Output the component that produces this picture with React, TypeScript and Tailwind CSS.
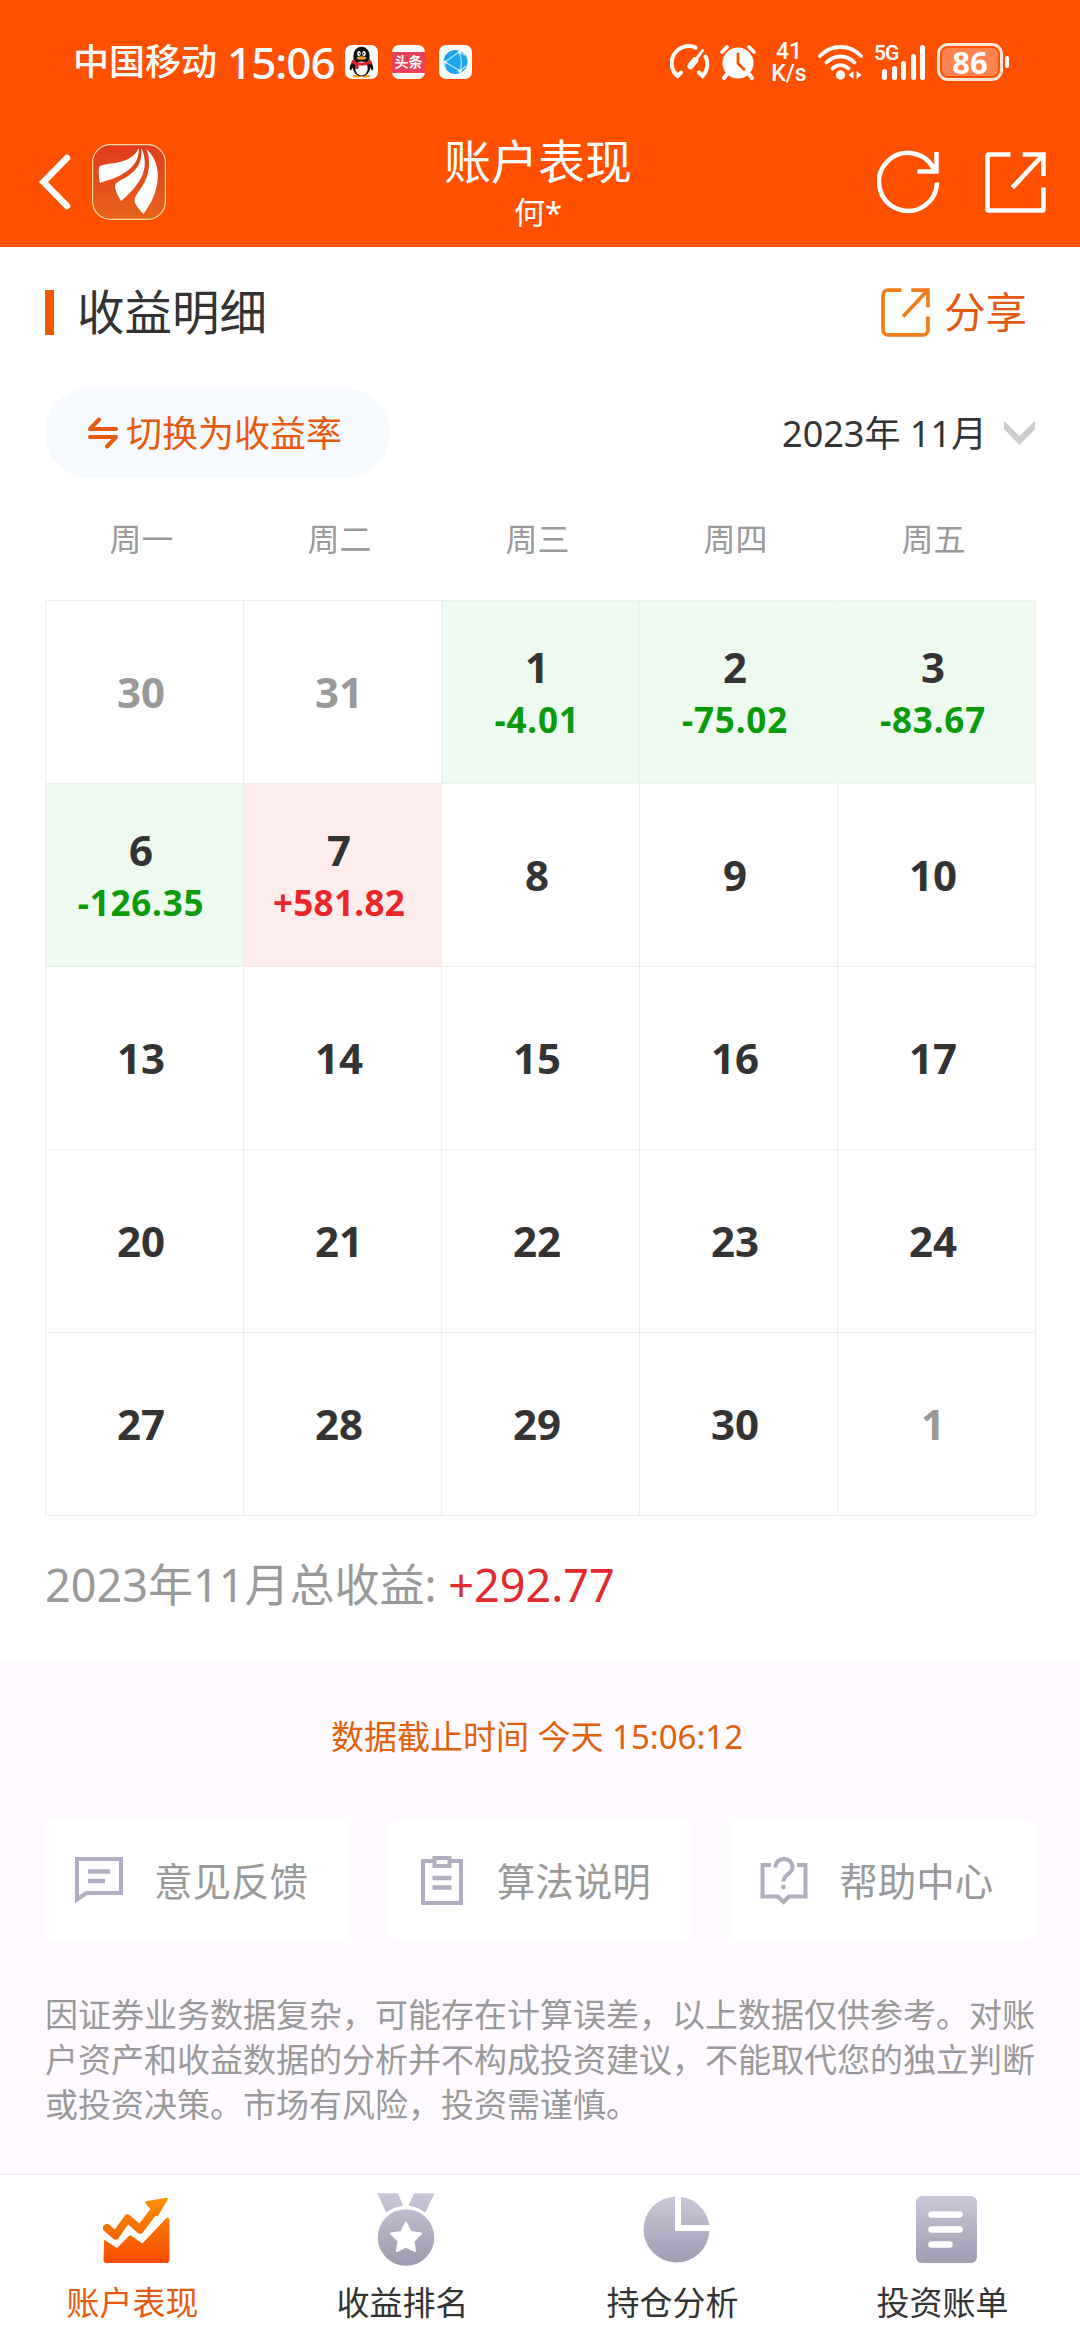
import { ReactNode } from 'react';
import clsx from 'clsx';

type Day = { day: number; value?: string; muted?: boolean };

const weekdays = ['周一', '周二', '周三', '周四', '周五'];

const days: Day[] = [
  { day: 30, muted: true },
  { day: 31, muted: true },
  { day: 1, value: '-4.01' },
  { day: 2, value: '-75.02' },
  { day: 3, value: '-83.67' },
  { day: 6, value: '-126.35' },
  { day: 7, value: '+581.82' },
  { day: 8 },
  { day: 9 },
  { day: 10 },
  { day: 13 },
  { day: 14 },
  { day: 15 },
  { day: 16 },
  { day: 17 },
  { day: 20 },
  { day: 21 },
  { day: 22 },
  { day: 23 },
  { day: 24 },
  { day: 27 },
  { day: 28 },
  { day: 29 },
  { day: 30 },
  { day: 1, muted: true },
];

const QQIcon = () => (
  <svg width="33" height="34" viewBox="0 0 33 34">
    <rect width="33" height="34" rx="7" fill="#fff" />
    <path d="M9 14C6 18 4 22 5 25c1 1 2-1 3-3M24 14c3 4 5 8 4 11-1 1-2-1-3-3" fill="#111" />
    <ellipse cx="12" cy="31" rx="4.5" ry="1.6" fill="#f5a623" />
    <ellipse cx="21" cy="31" rx="4.5" ry="1.6" fill="#f5a623" />
    <ellipse cx="16.5" cy="21.5" rx="9" ry="9.8" fill="#111" />
    <ellipse cx="16.5" cy="23.5" rx="6.2" ry="7" fill="#fff" />
    <path d="M8.5 15V10a8 8.3 0 0 1 16 0v5z" fill="#111" />
    <path d="M7 15c6 3.5 13 3.5 19 0l1 3.5c-4 1.5-7 2-10.5 2-1 0-2 0-3-.2V24h-3.5v-4.5L6.5 18z" fill="#e0202c" />
    <ellipse cx="14" cy="8.5" rx="1.8" ry="2.5" fill="#fff" />
    <ellipse cx="19" cy="8.5" rx="1.8" ry="2.5" fill="#fff" />
    <circle cx="14.5" cy="8.8" r=".8" fill="#111" />
    <circle cx="18.5" cy="8.8" r=".8" fill="#111" />
    <ellipse cx="16.5" cy="13" rx="4.8" ry="1.7" fill="#f5a623" />
  </svg>
);

const GlobeIcon = () => (
  <svg width="33" height="34" viewBox="0 0 33 34">
    <rect width="33" height="34" rx="7" fill="#fff" />
    <circle cx="16.5" cy="17" r="12" fill="#1ba4f0" />
    <path d="M6 17 20 7M6 17l15 9M20 7c3 6 3 13 1 21M6 17c-1 4 0 6 2 9M20 7l6 3M21 26l6-5" stroke="#bfe8ff" strokeWidth="1.2" fill="none" />
    <circle cx="6" cy="17" r="1.6" fill="#fff" />
    <circle cx="20.5" cy="7" r="1.6" fill="#fff" />
    <circle cx="21" cy="26" r="1.8" fill="#fff" />
  </svg>
);

const GaugeIcon = () => (
  <svg width="40" height="36" viewBox="0 0 40 36" fill="none" stroke="#fff" strokeLinecap="round">
    <path d="M25.5 3.6A17 17 0 0 0 7.5 32l3.5-3.500" strokeWidth="4" />
    <path d="M35.5 12.5A17 17 0 0 1 32.5 32L29 28.5" strokeWidth="4" />
    <path d="M32.5 6.5 21.5 22" strokeWidth="3" />
    <path d="m25 16.500-4.500 5.500" strokeWidth="6.5" />
  </svg>
);

const AlarmIcon = () => (
  <svg width="36" height="36" viewBox="0 0 36 36" fill="none" stroke="#fff" strokeLinecap="round">
    <circle cx="18" cy="19" r="15.5" fill="#fff" stroke="none" />
    <path d="M2 8l5-5M34 8l-5-5" strokeWidth="3.6" />
    <path d="M7 30l-3 4M29 30l3 4" strokeWidth="4" />
    <path d="M18 10v9.500l6 6" stroke="#ff5000" strokeWidth="2.8" />
  </svg>
);

const WifiIcon = () => (
  <svg width="45" height="37" viewBox="0 0 45 37" fill="none" stroke="#fff" strokeLinecap="round">
    <path d="M2 12C13 0 32 0 43 12" strokeWidth="3.8" />
    <path d="M8.5 18.5c8-8 20-8 28 0" strokeWidth="3.8" />
    <path d="M14.5 24.5c5-4.500 11-4.500 16 0" strokeWidth="3.8" />
    <circle cx="22.5" cy="31" r="4.7" fill="#fff" stroke="none" />
    <path d="M35.5 27v8l-5-4zM38.5 27v8l5-4z" fill="#fff" stroke="none" />
  </svg>
);

const LogoIcon = () => (
  <svg width="74" height="76" viewBox="0 0 74 76">
    <defs>
      <linearGradient id="logo" x1="0" y1="0" x2="0" y2="1">
        <stop offset="0" stopColor="#e03a1c" />
        <stop offset="1" stopColor="#e8641a" />
      </linearGradient>
    </defs>
    <rect x=".6" y=".6" width="72.8" height="74.8" rx="18" fill="url(#logo)" stroke="#ffd9a8" strokeWidth="1.2" />
    <path d="M47 4C42 14 32 18 20 19.5 14 20.3 9 21 7.500 22.500 6 26 7 34 8 39c7-3 14-4 21-8C41 24 47 17 47 4z" fill="#fff" />
    <path d="M49.5 4C58 24 50 39 29 57c-3-5-6-11-6-15 0-4 7-6 13-10C46 25 50 18 49.5 4z" fill="#fff" />
    <path d="M54.5 5C66 16 68 30 64 45c-2 9-7 17-12.500 25C47 65 43 61 42.500 56.500 43 50 50 45 54 35c4-10 4-20 .5-30z" fill="#fff" />
  </svg>
);

const RefreshIcon = () => (
  <svg width="63" height="64" viewBox="0 0 63 64" fill="none" stroke="#fff" strokeWidth="4.5">
    <path d="M60 32.5A29 29 0 1 1 57 19M59.5 2v19.5H40.5" />
  </svg>
);

const ShareIcon = ({ size, color, width, r }: { size: number; color: string; width: number; r: number }) => (
  <svg width={size} height={size} viewBox="0 0 60 60" fill="none" stroke={color} strokeWidth={width} strokeLinejoin="round">
    <path d={`M25 2.500H${2.5 + r}a${r} ${r} 0 0 0-${r} ${r}V${57.5 - r}a${r} ${r} 0 0 0 ${r} ${r}H${57.5 - r}a${r} ${r} 0 0 0 ${r}-${r}V35`} />
    <path d="M37 2.500h20.500v21M57 3 27 35" strokeLinejoin="miter" />
  </svg>
);

const Header = () => (
  <header className="h-[247px] bg-[#ff5000] text-white">
    <div className="flex h-[124px] items-center pr-[71px] pl-[73px]">
      <span className="text-[36px] font-medium">中国移动</span>
      <span className="ml-2.5 w-[109px] text-[44px] font-medium tracking-[-1px] whitespace-nowrap">15:06</span>
      <div className="ml-[9px] flex items-center gap-[14px]">
        <QQIcon />
        <div className="flex h-[34px] w-[33px] items-center justify-center overflow-hidden rounded-[7px] bg-white">
          <span className="h-[21px] w-full bg-[#ea3f58] text-center text-[14px] leading-[20px] font-bold">头条</span>
        </div>
        <GlobeIcon />
      </div>
      <div className="ml-auto flex items-center">
        <GaugeIcon />
        <div className="ml-[10px]">
          <AlarmIcon />
        </div>
        <div className="ml-[14px] flex w-[38px] flex-col items-center font-['Roboto'] text-[23px] leading-[23px] font-medium">
          <span className="h-[22px]">41</span>
          <span className="h-[22px]">K/s</span>
        </div>
        <div className="ml-[10px]">
          <WifiIcon />
        </div>
        <div className="relative ml-[11px] flex h-[36px] w-[51px] items-end justify-end gap-[4.5px]">
          <span className="absolute top-[-3px] left-0 font-['Roboto'] text-[21px] leading-6 font-semibold tracking-[-1px]">5G</span>
          <i className="h-[11px] w-[5px] rounded-full bg-white" />
          <i className="h-[14px] w-[5px] rounded-full bg-white" />
          <i className="h-[19px] w-[5px] rounded-full bg-white" />
          <i className="h-[26px] w-[5px] rounded-full bg-white" />
          <i className="h-[35px] w-[5px] rounded-full bg-white" />
        </div>
        <div className="ml-[12px] flex h-[38px] w-[66px] items-center justify-center rounded-[11px] border-3 border-[#ffe6d8] p-[2px]">
          <span className="h-full w-full rounded-[6px] bg-[#ff8350] text-center text-[31px] leading-[28px] font-bold">86</span>
        </div>
        <i className="ml-[2px] h-[12px] w-[4px] rounded-full bg-white" />
      </div>
    </div>
    <div className="grid h-[116px] grid-cols-3 items-center px-[35px]">
      <div className="flex items-center pl-[4px]">
        <svg width="32" height="56" viewBox="0 0 32 56" fill="none" stroke="#fff" strokeWidth="6.5" strokeLinecap="round">
          <path d="M28 4 4.500 28 28 52" />
        </svg>
        <div className="ml-[21px]">
          <LogoIcon />
        </div>
      </div>
      <div className="flex flex-col items-center pr-[4px]">
        <h1 className="text-[47px] leading-[60px]">账户表现</h1>
        <span className="text-[31px] leading-[43px]">何*</span>
      </div>
      <div className="-mr-px flex items-center justify-end gap-[45px]">
        <RefreshIcon />
        <ShareIcon size={61} color="#fff" width={4.5} r={1} />
      </div>
    </div>
  </header>
);

const Calendar = () => (
  <div className="mt-[31px]">
    <div className="grid grid-cols-5 text-center text-[32px] leading-[60px] text-[#999]">
      {weekdays.map((w) => (
        <span key={w} className="pr-[5px]">{w}</span>
      ))}
    </div>
    <div className="mt-[31px] -mr-px grid grid-cols-5 border-t border-l border-[#eee]">
      {days.map((d, i) => (
        <div
          key={i}
          className={clsx(
            'flex h-[183px] flex-col items-center justify-center border-r border-b pr-[7px] font-bold',
            !d.value && 'border-[#eee]',
            d.value?.startsWith('-') && 'border-[#eaf3ea] bg-[#eefaef]',
            d.value?.startsWith('+') && 'border-[#fbe9e9] bg-[#ffecec]'
          )}
        >
          <span className={clsx('text-[42px] leading-[54px]', d.muted ? 'text-[#999]' : 'text-[#333]')}>{d.day}</span>
          {d.value && (
            <span
              className={clsx(
                'pt-[2px] text-[35px] leading-[48px]',
                d.value.startsWith('-') ? 'tracking-[0.8px] text-[#0a9a0a]' : 'tracking-[0.3px] text-[#ea2626]'
              )}
            >
              {d.value}
            </span>
          )}
        </div>
      ))}
    </div>
  </div>
);

const FeedbackIcon = () => (
  <svg width="48" height="46" viewBox="0 0 48 46" fill="none" stroke="#b1aec1" strokeWidth="4">
    <path d="M2 2h44v34H11.500L2 42.500z" />
    <path d="M13 14.500h22M13 24h17" strokeWidth="4.5" />
  </svg>
);

const ClipboardIcon = () => (
  <svg width="42" height="49" viewBox="0 0 42 49" fill="none" stroke="#b1aec1" strokeWidth="4">
    <path d="M12 5H2v42h38V5H30M13.500 2h15v8h-15z" />
    <path d="M11.500 22h19M11.500 31.500h19" strokeWidth="4.5" />
  </svg>
);

const HelpIcon = () => (
  <svg width="48" height="49" viewBox="0 0 48 49" fill="none" stroke="#b1aec1" strokeWidth="4">
    <path d="M11 9H2.500v31.500H18l5.500 5.500 5.500-5.500h16.500V9H37" />
    <path d="M15.500 11.500C15.500 0 32.500 0 32.500 11.500c0 6-9 7-9 14" />
    <circle cx="23.5" cy="31" r="2.4" fill="#b1aec1" stroke="none" />
  </svg>
);

const LinkCard = ({ icon, label }: { icon: ReactNode; label: string }) => (
  <button className="flex h-[120px] items-center rounded-lg bg-white pl-[29px]">
    <span className="flex w-[50px] justify-center">{icon}</span>
    <span className="mt-[3px] ml-[30px] text-[38.5px] text-[#999]">{label}</span>
  </button>
);

const Gradients = () => (
  <svg width="0" height="0" className="absolute">
    <defs>
      <linearGradient id="active" x1="0" y1="0" x2="0" y2="66" gradientUnits="userSpaceOnUse">
        <stop offset="0" stopColor="#f99200" />
        <stop offset="1" stopColor="#f84a00" />
      </linearGradient>
      <linearGradient id="idle" x1="0" y1="0" x2="0" y2="72" gradientUnits="userSpaceOnUse">
        <stop offset="0" stopColor="#cbc7da" />
        <stop offset="1" stopColor="#9d99ae" />
      </linearGradient>
    </defs>
  </svg>
);

const TrendIcon = () => (
  <svg width="67" height="66" viewBox="0 0 67 66" fill="url(#active)" stroke="url(#active)" strokeLinejoin="round">
    <path d="M1.500 43.500 14 51.500 27 38.500 39.500 47 63 22c1.500-1.500 3-1 3 1v40.500a2 2 0 0 1-2 2H3a2 2 0 0 1-2-2z" strokeWidth="1" />
    <path d="M4 31 12.500 38.500 24.500 21.500 37 32.500 52.500 12" fill="none" strokeWidth="8" strokeLinecap="round" />
    <path d="M43.500 5.500 63.500 2 54 18z" strokeWidth="2.5" />
  </svg>
);

const MedalIcon = () => (
  <svg width="58" height="73" viewBox="0 0 58 73" fill="url(#idle)" stroke="url(#idle)" strokeLinejoin="round">
    <path d="M1.500 1h19l4.500 11c-6 1-11 3-15.500 6.500zM56.500 1h-19L32.500 12c6 1 11 3 15.500 6.500z" strokeWidth="1.5" />
    <circle cx="29" cy="44.5" r="28.3" stroke="none" />
    <path d="m29 29.500 4.500 9.500 10.500 1.500-7.500 7.500 1.500 10-9-4.500-9 4.500 1.500-10-7.500-7.500 10.500-1.500z" fill="#fff" stroke="#fff" strokeWidth="2" />
  </svg>
);

const PieIcon = () => (
  <svg width="67" height="67" viewBox="0 0 67 67" fill="url(#idle)">
    <path d="M32 .5A33 33 0 1 0 66.500 35H32z" />
    <path d="M38 .8A33 33 0 0 1 66.300 29H38z" />
  </svg>
);

const BillIcon = () => (
  <svg width="61" height="67" viewBox="0 0 61 67">
    <rect width="61" height="67" rx="6" fill="url(#idle)" />
    <path d="M15.500 18.500h28M15.500 33.500h28M15.500 48.500h18" stroke="#fff" strokeWidth="6.5" strokeLinecap="round" />
  </svg>
);

const tabs = [
  { label: '账户表现', icon: <TrendIcon />, active: true },
  { label: '收益排名', icon: <MedalIcon /> },
  { label: '持仓分析', icon: <PieIcon /> },
  { label: '投资账单', icon: <BillIcon /> },
];

const TabBar = () => (
  <nav className="grid h-[166px] grid-cols-4 border-t border-[#ece8ee] bg-white">
    {tabs.map((tab) => (
      <div key={tab.label} className="flex flex-col items-center pt-[18px]">
        <div className="flex h-[73px] items-center pl-[2px]">{tab.icon}</div>
        <span className={clsx('mt-[15px] pr-[5px] text-[33px] leading-[44px]', tab.active ? 'text-[#e85a10]' : 'text-[#333]')}>
          {tab.label}
        </span>
      </div>
    ))}
  </nav>
);

const App = () => {
  return (
    <div className="flex h-[2340px] w-[1080px] flex-col bg-white font-['Noto_Sans','Noto_Sans_CJK_SC',sans-serif]">
      <Gradients />
      <Header />

      <main className="h-[1415px] px-[45px] pt-[30px]">
        <div className="flex h-[70px] items-center">
          <i className="h-[45px] w-[9px] bg-[#f05800]" />
          <h2 className="ml-[23px] text-[47.5px] leading-[70px] text-[#333]">收益明细</h2>
          <div className="mr-[8px] ml-auto flex items-center text-[#e05a10]">
            <ShareIcon size={49} color="#f07d1c" width={4.5} r={6} />
            <span className="ml-[14px] text-[41.5px] leading-[60px]">分享</span>
          </div>
        </div>

        <div className="mt-[41px] flex items-center justify-between">
          <button className="flex h-[90px] w-[345px] items-center rounded-full bg-[#f6faff] pl-[42px] text-[#e65a10]">
            <svg width="32" height="32" viewBox="0 0 32 32" fill="none" stroke="currentColor" strokeWidth="4" strokeLinecap="round" strokeLinejoin="round">
              <path d="M29 12H3L12 2.500M3 20h26l-9 9.500" />
            </svg>
            <span className="mt-px ml-[7px] text-[36px]">切换为收益率</span>
          </button>
          <div className="flex items-center text-[36px] text-[#333]">
            <span className="mt-px">2023年 11月</span>
            <svg className="ml-[17px]" width="31" height="26" viewBox="0 0 31 26" fill="#ccc">
              <path d="M0 1 15.500 16 31 1v8L15.500 25 0 9z" />
            </svg>
          </div>
        </div>

        <Calendar />

        <p className="mt-[39px] text-[45px] leading-[60px] text-[#999]">
          2023年11月总收益: <span className="text-[#e02a2e]">+292.77</span>
        </p>
      </main>

      <section className="flex-1 bg-[#fefaff] px-[45px] pt-[50px]">
        <p className="pr-[6px] text-center text-[33px] leading-[50px] text-[#e0600c]">数据截止时间 今天 15:06:12</p>
        <div className="mt-[58px] grid grid-cols-3 gap-[38px]">
          <LinkCard icon={<FeedbackIcon />} label="意见反馈" />
          <LinkCard icon={<ClipboardIcon />} label="算法说明" />
          <LinkCard icon={<HelpIcon />} label="帮助中心" />
        </div>
        <p className="mt-[52px] text-[33px] leading-[45px] text-[#999]">
          因证券业务数据复杂，可能存在计算误差，以上数据仅供参考。对账户资产和收益数据的分析并不构成投资建议，不能取代您的独立判断或投资决策。市场有风险，投资需谨慎。
        </p>
      </section>

      <TabBar />
    </div>
  );
};

export default App;
